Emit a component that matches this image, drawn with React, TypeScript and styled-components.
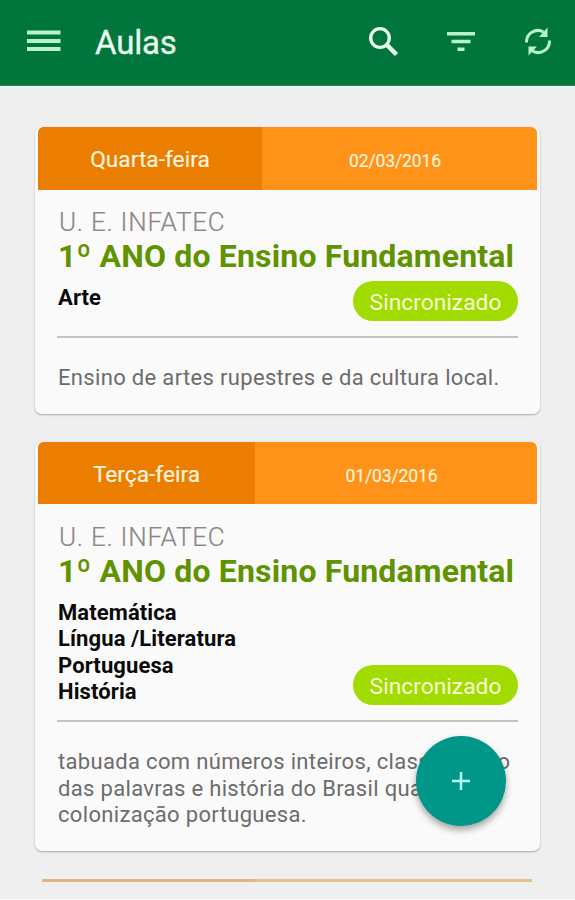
import styled, { createGlobalStyle } from "styled-components"

const GlobalStyle = createGlobalStyle`
    * {
        box-sizing: border-box;
    }
    body {
        margin: 0;
        background-color: #fdfdfd;
        font-family: Roboto, "Liberation Sans", sans-serif;
    }
    `
const Screen = styled.div`
    position: relative;
    display: flex;
    flex-direction: column;
    width: 575px;
    height: 899px;
    overflow: hidden;
    background-color: #efefef;
    `
const TopBar = styled.header`
    display: flex;
    align-items: center;
    flex: none;
    height: 86px;
    padding: 0 22px 3px 27px;
    background-color: #00763d;
    border-bottom: 1px solid #2f8258;
    color: #eafff0;
    `
const MenuIcon = styled.svg`
    width: 34px;
    height: 24px;
    margin-right: 34px;
    `
const TopBarTitle = styled.h1`
    flex: 1;
    margin: 4px 0 0;
    font-size: 33px;
    font-weight: 400;
    line-height: 40px;
    letter-spacing: -0.2px;
    -webkit-text-stroke: 0.3px currentColor;
    `
const TopBarActions = styled.div`
    display: flex;
    align-items: center;
    gap: 47px;
    padding-top: 1px;
    & > svg {
        width: 30px;
        height: 30px;
    }
    `
const CardList = styled.main`
    display: flex;
    flex-direction: column;
    gap: 28px;
    padding: 41px 35px 0;
    `
const Card = styled.article`
    flex: none;
    padding: 0 3px;
    border-radius: 7px;
    background-color: #fafafa;
    box-shadow: 0 1px 2px rgba(0, 0, 0, 0.3);
    `
const CardHeader = styled.div`
    display: flex;
    height: 62.5px;
    border-radius: 6px 6px 0 0;
    overflow: hidden;
    background-color: #ff931a;
    color: #fff4dc;
    `
const Weekday = styled.div<{ $width: number }>`
    display: flex;
    align-items: center;
    justify-content: center;
    width: ${(props) => props.$width}px;
    padding-top: 3px;
    background-color: #eb7d00;
    font-size: 22.7px;
    -webkit-text-stroke: 0.2px currentColor;
    `
const LessonDate = styled.div`
    display: flex;
    flex: 1;
    align-items: center;
    justify-content: center;
    padding-top: 5px;
    padding-right: 9px;
    font-size: 17.5px;
    letter-spacing: -0.1px;
    -webkit-text-stroke: 0.2px currentColor;
    `
const CardBody = styled.div`
    padding: 15.5px 19px 22.3px;
    `
const School = styled.div`
    padding-left: 2px;
    font-size: 26px;
    font-weight: 300;
    line-height: 34px;
    letter-spacing: 0.75px;
    color: #8e8686;
    -webkit-text-stroke: 0.2px currentColor;
    `
const Grade = styled.h2`
    margin: -1px 0 0;
    padding-left: 1px;
    font-size: 32px;
    font-weight: 700;
    line-height: 36px;
    letter-spacing: 0.17px;
    white-space: nowrap;
    color: #5f9300;
    `
const SubjectRow = styled.div`
    display: flex;
    align-items: flex-end;
    justify-content: space-between;
    margin-top: 7px;
    padding-bottom: 15px;
    border-bottom: 2px solid #c3c3c3;
    `
const Subjects = styled.div`
    align-self: flex-start;
    width: 200px;
    margin-bottom: -1px;
    padding: 4px 0 0 1px;
    font-size: 22px;
    font-weight: 700;
    line-height: 26.5px;
    letter-spacing: 0.1px;
    color: #0a0a0a;
    `
const SyncBadge = styled.span`
    width: 165px;
    height: 40px;
    border-radius: 20px;
    background-color: #a2db00;
    font-size: 22.8px;
    line-height: 43px;
    text-align: center;
    color: #f6ffd6;
    `
const Description = styled.p`
    margin: 27.2px 0 0;
    padding-left: 1px;
    font-size: 22px;
    line-height: 26.5px;
    letter-spacing: 0.33px;
    white-space: pre;
    color: #6c6c6c;
    `
const NextCardEdge = styled.div`
    display: flex;
    flex: none;
    height: 3px;
    margin: 0 8px 0 7px;
    background-color: #e5c08a;
    `
const NextCardWeekday = styled.div`
    width: 213px;
    background-color: #dfb67c;
    `
const AddButton = styled.button`
    position: absolute;
    right: 69px;
    bottom: 73px;
    display: flex;
    align-items: center;
    justify-content: center;
    width: 90px;
    height: 90px;
    padding: 0;
    border: 0;
    border-radius: 50%;
    background-color: #009688;
    box-shadow: 0 4px 7px rgba(0, 0, 0, 0.35);
    color: #b5fff0;
    `

const lessons = [
    {
        weekday: "Quarta-feira",
        weekdayWidth: 224,
        date: "02/03/2016",
        subjects: ["Arte"],
        description: "Ensino de artes rupestres e da cultura local.",
    },
    {
        weekday: "Terça-feira",
        weekdayWidth: 217,
        date: "01/03/2016",
        subjects: ["Matemática", "Língua /Literatura", "Portuguesa", "História"],
        description: "tabuada com números inteiros, classificação\ndas palavras e história do Brasil quanto\ncolonização portuguesa.",
    },
]

const App = () => {
    return (
        <>
            <GlobalStyle />
            <Screen>
                <TopBar>
                    <MenuIcon viewBox="0 0 34 24" stroke="#b9f3cb" strokeWidth="4">
                        <path d="M0 3.500h33.500M0 11.900h33.500M0 20h33.500" />
                    </MenuIcon>
                    <TopBarTitle>Aulas</TopBarTitle>
                    <TopBarActions>
                        <svg viewBox="0 0 30 30" fill="none" stroke="#eaffe8">
                            <circle cx="11" cy="11" r="9.300" strokeWidth="3.300" />
                            <path d="M17.500 17.500l10 10" strokeWidth="4.500" />
                        </svg>
                        <svg viewBox="0 0 30 30" stroke="#b9f3cb" strokeWidth="3.500">
                            <path d="M1 6.700h28M5.500 14.500h19M11.500 22.200h7" />
                        </svg>
                        <svg viewBox="0 0 30 30" fill="none" stroke="#b9f3cb" strokeWidth="3">
                            <path d="M3.500 15.500C3 6.500 12.500 0.500 20.500 5" />
                            <path d="M26.500 13.500C27 22.500 17.500 28.500 9.500 24" />
                            <path d="M24.500 0.500v9.500h-8.500z" fill="#b9f3cb" stroke="none" />
                            <path d="M5.500 28.500v-9h8.500z" fill="#b9f3cb" stroke="none" />
                        </svg>
                    </TopBarActions>
                </TopBar>
                <CardList>
                    {lessons.map((lesson) => (
                        <Card key={lesson.date}>
                            <CardHeader>
                                <Weekday $width={lesson.weekdayWidth}>{lesson.weekday}</Weekday>
                                <LessonDate>{lesson.date}</LessonDate>
                            </CardHeader>
                            <CardBody>
                                <School>U. E. INFATEC</School>
                                <Grade>1º ANO do Ensino Fundamental</Grade>
                                <SubjectRow>
                                    <Subjects>
                                        {lesson.subjects.map((subject) => (
                                            <div key={subject}>{subject}</div>
                                        ))}
                                    </Subjects>
                                    <SyncBadge>Sincronizado</SyncBadge>
                                </SubjectRow>
                                <Description>{lesson.description}</Description>
                            </CardBody>
                        </Card>
                    ))}
                    <NextCardEdge>
                        <NextCardWeekday />
                    </NextCardEdge>
                </CardList>
                <AddButton aria-label="Adicionar">
                    <svg width="18" height="18" viewBox="0 0 18 18" stroke="currentColor" strokeWidth="2.500">
                        <path d="M9 0v18M0 9h18" />
                    </svg>
                </AddButton>
            </Screen>
        </>
    )
}

export default App
